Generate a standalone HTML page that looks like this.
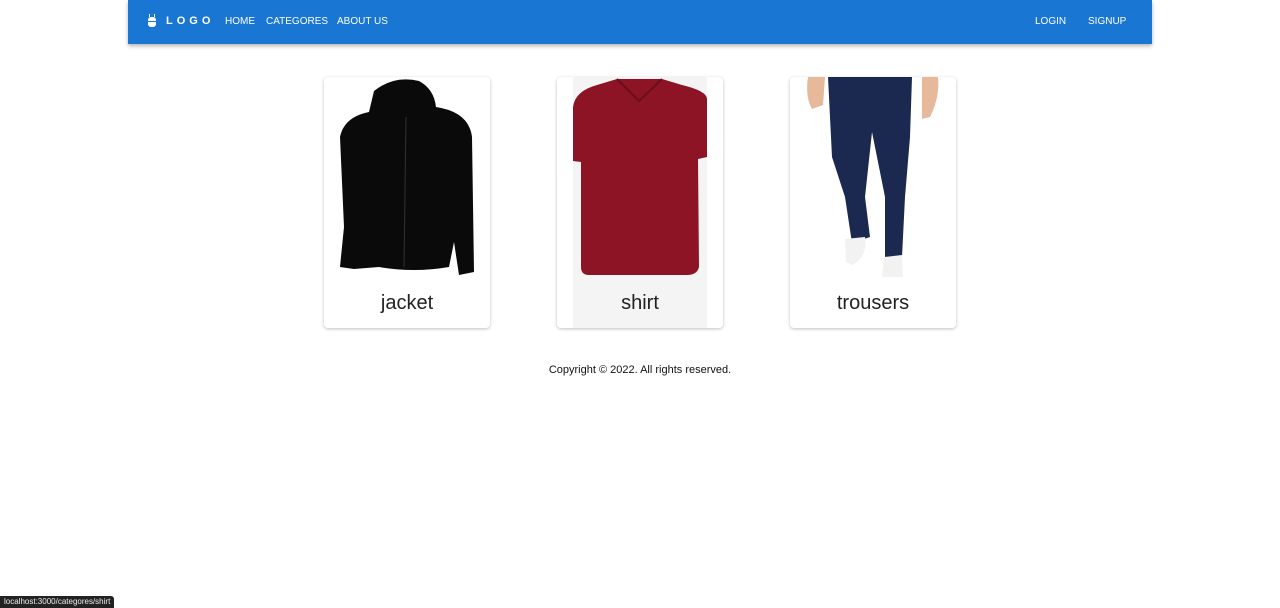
<!DOCTYPE html>
<html><head><meta charset="utf-8"><style>
body{margin:0;background:#fff;font-family:"Liberation Sans",sans-serif;width:1280px;height:608px;position:relative;overflow:hidden}
.nav{position:absolute;left:128px;top:0;width:1024px;height:44px;background:#1976d2;box-shadow:0 2px 4px rgba(0,0,0,.3);color:#fff;font-size:10px}
.nav span{position:absolute;top:16px}
.logo{font-weight:bold;letter-spacing:4px;font-size:11px}
.card{position:absolute;top:77px;width:166px;height:251px;background:#fff;border-radius:4px;box-shadow:0 1px 3px rgba(0,0,0,.25)}
.card .t{position:absolute;left:0;right:0;top:215px;text-align:center;font-size:20px;color:#222}
.card svg{position:absolute;left:0;top:0}
.foot{position:absolute;top:364px;left:0;width:1280px;text-align:center;font-size:11px;color:#111}
.status{position:absolute;left:0;top:596px;background:#222;color:#eee;font-size:8px;padding:2px 4px;border-radius:0 3px 0 0;height:8px;line-height:8px}
</style></head><body>
<div class="nav">
<svg style="position:absolute;left:19px;top:13px" width="10" height="16" viewBox="0 0 10 16"><rect x="1" y="4" width="8" height="10" rx="3" fill="#fff"/><rect x="2" y="1" width="1" height="3" fill="#fff"/><rect x="7" y="1" width="1" height="3" fill="#fff"/><rect x="1" y="8" width="8" height="1" fill="#1976d2"/></svg>
<span class="logo" style="left:38px;top:15px">LOGO</span>
<span style="left:97px">HOME</span>
<span style="left:138px">CATEGORES</span>
<span style="left:209px">ABOUT US</span>
<span style="left:907px">LOGIN</span>
<span style="left:960px">SIGNUP</span>
</div>

<div class="card" style="left:324px">
<svg width="166" height="205" viewBox="0 0 166 205">
<path d="M50 14 Q70 -2 95 4 Q110 12 112 30 Q145 35 148 60 L150 195 L135 198 L130 165 L125 190 Q90 196 55 190 L30 192 L16 190 L20 150 L16 60 Q20 40 45 35 Z" fill="#0a0a0a"/>
<path d="M82 40 L80 190" stroke="#333" stroke-width="1"/>
</svg>
<div class="t">jacket</div></div>

<div class="card" style="left:557px">
<div style="position:absolute;left:16px;top:0;width:134px;height:251px;background:#f4f4f4"></div>
<svg width="166" height="205" viewBox="0 0 166 205">
<path d="M60 2 L105 2 L125 8 Q150 14 150 22 L150 80 L141 82 L142 190 Q140 198 130 198 L32 198 Q24 198 24 190 L24 85 L16 84 L16 30 Q18 14 40 8 Z" fill="#8c1424"/>
<path d="M60 2 L82 24 L105 2" stroke="#6a0f1b" stroke-width="2" fill="none"/>
</svg>
<div class="t">shirt</div></div>

<div class="card" style="left:790px">
<svg width="166" height="205" viewBox="0 0 166 205">
<path d="M20 0 L35 0 L33 28 L22 32 Q15 20 18 0Z M132 0 L148 0 Q150 20 140 40 L132 42 Z" fill="#e7b99b"/>
<path d="M38 0 L122 0 L120 60 L115 120 L112 180 L95 182 L95 120 L82 55 L75 120 L80 160 L62 166 L55 120 L42 80 Z" fill="#1b2850"/>
<path d="M55 162 L75 160 Q78 180 62 188 L56 185 Z M94 180 L112 178 L113 200 L92 200 Z" fill="#f2f2f2"/>
</svg>
<div class="t">trousers</div></div>

<div class="foot">Copyright © 2022. All rights reserved.</div>
<div class="status">localhost:3000/categores/shirt</div>
</body></html>
